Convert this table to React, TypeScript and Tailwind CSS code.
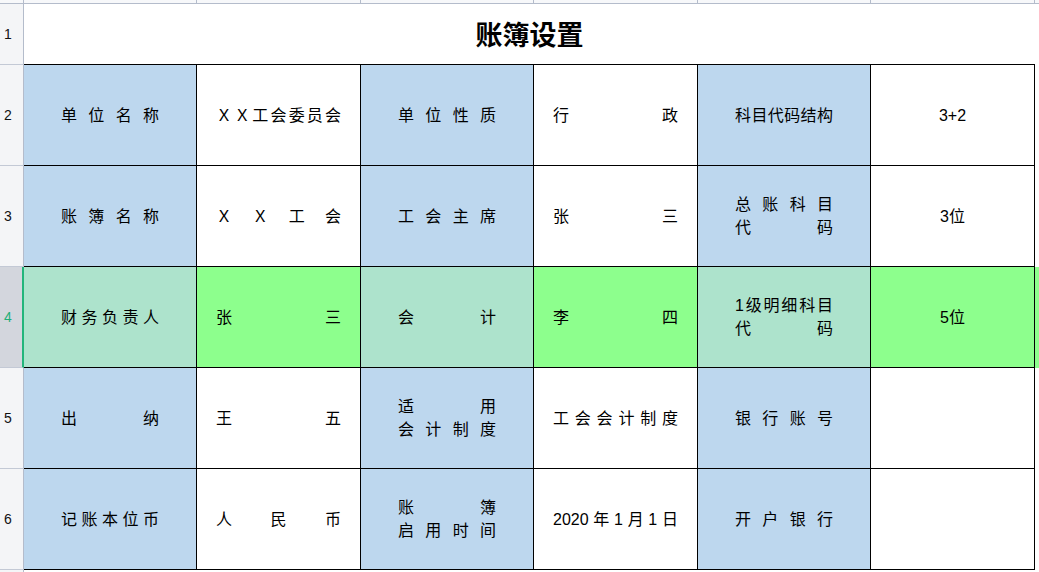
type Line = string[];

interface CellDef {
  lines: Line[];
  center?: boolean;
}

const COL_W = ['w-[173px]', 'w-[164px]', 'w-[173px]', 'w-[164px]', 'w-[173px]', 'w-[164px]'];
const COL_PAD = ['px-[37px]', 'px-[19px]', 'px-[37px]', 'px-[19px]', 'px-[37px]', 'px-[19px]'];

const split = (s: string) => s.split('');

const ROWS: CellDef[][] = [
  [
    { lines: [split('单位名称')] },
    { lines: [split('ＸＸ工会委员会')] },
    { lines: [split('单位性质')] },
    { lines: [['行', '政']] },
    { lines: [split('科目代码结构')] },
    { lines: [['3+2']], center: true },
  ],
  [
    { lines: [split('账簿名称')] },
    { lines: [split('ＸＸ工会')] },
    { lines: [split('工会主席')] },
    { lines: [['张', '三']] },
    { lines: [split('总账科目'), ['代', '码']] },
    { lines: [['3位']], center: true },
  ],
  [
    { lines: [split('财务负责人')] },
    { lines: [['张', '三']] },
    { lines: [['会', '计']] },
    { lines: [['李', '四']] },
    { lines: [split('1级明细科目'), ['代', '码']] },
    { lines: [['5位']], center: true },
  ],
  [
    { lines: [['出', '纳']] },
    { lines: [['王', '五']] },
    { lines: [['适', '用'], split('会计制度')] },
    { lines: [split('工会会计制度')] },
    { lines: [split('银行账号')] },
    { lines: [] },
  ],
  [
    { lines: [split('记账本位币')] },
    { lines: [['人', '民', '币']] },
    { lines: [['账', '簿'], split('启用时间')] },
    { lines: [['2020', '年', '1', '月', '1', '日']] },
    { lines: [split('开户银行')] },
    { lines: [] },
  ],
];

function RowHead({ n, active, h }: { n?: number; active?: boolean; h: string }) {
  return (
    <div
      className={`${h} w-[24px] shrink-0 flex items-center pl-[4px] text-[14px] border-b border-[#c3c9d5] ${
        active
          ? 'bg-[#d3d6dd] text-[#1fae78] border-r-2 border-r-[#22b57a]'
          : 'bg-[#f4f5f7] text-[#111] border-r border-r-[#b4bccb]'
      }`}
    >
      {n}
    </div>
  );
}

function Cell({ def, col, active }: { def: CellDef; col: number; active: boolean }) {
  const label = col % 2 === 0;
  const bg = active ? (label ? 'bg-[#ade3cc]' : 'bg-[#8dff8d]') : label ? 'bg-[#bdd7ee]' : 'bg-white';
  return (
    <div
      className={`${COL_W[col]} ${bg} shrink-0 h-full border-r border-b border-black flex flex-col justify-center ${
        def.center ? 'items-center' : COL_PAD[col]
      }`}
    >
      {def.lines.map((line, i) => (
        <div key={i} className="flex justify-between leading-[23px]">
          {line.map((t, j) => (
            <span key={j}>{t}</span>
          ))}
        </div>
      ))}
    </div>
  );
}

export default function App() {
  return (
    <div className="w-[1039px] h-[572px] overflow-hidden bg-white text-black text-[16px] font-['Liberation_Sans','Noto_Sans_CJK_SC',sans-serif]">
      {/* column header strip */}
      <div className="flex h-[4px] bg-[#f7f8fa] border-b border-[#b4bccb]">
        <div className="w-[24px] shrink-0 border-r border-[#b4bccb]" />
        {COL_W.map((w, i) => (
          <div key={i} className={`${w} shrink-0 border-r border-[#b4bccb]`} />
        ))}
      </div>

      {/* title row */}
      <div className="flex h-[61px]">
        <RowHead n={1} h="h-[61px]" />
        <div className="w-[1011px] shrink-0 border-b border-black flex items-center justify-center text-[27px] font-bold font-['Noto_Sans_CJK_SC',sans-serif]">
          账簿设置
        </div>
      </div>

      {ROWS.map((row, r) => {
        const active = r === 2;
        return (
          <div key={r} className="flex h-[101px]">
            <RowHead n={r + 2} h="h-[101px]" active={active} />
            {row.map((c, i) => (
              <Cell key={i} def={c} col={i} active={active} />
            ))}
            <div className={`w-[4px] shrink-0 ${active ? 'bg-[#8dff8d]' : 'bg-white'}`} />
          </div>
        );
      })}

      {/* next row, only its top shows */}
      <div className="flex h-[20px]">
        <RowHead h="h-[20px]" />
      </div>
    </div>
  );
}
